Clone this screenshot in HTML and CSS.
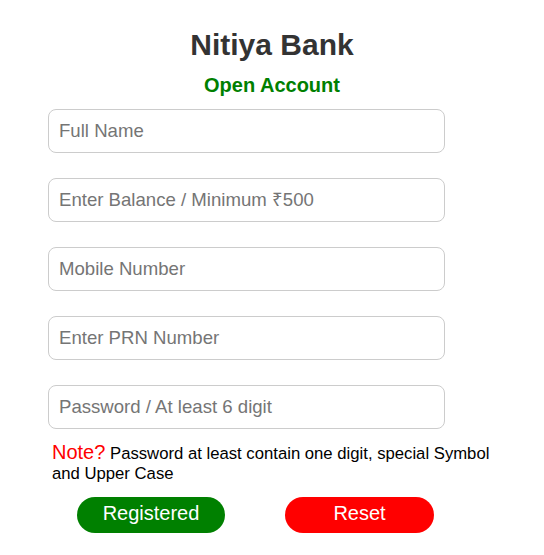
FILE: index.html
```html
<!DOCTYPE html>
<html>
<head>
<meta charset="utf-8">
<title>Nitiya Bank</title>
<link rel="stylesheet" href="styles.css">
</head>
<body>
<div class="page">
  <h1 class="title">Nitiya Bank</h1>
  <h2 class="subtitle">Open Account</h2>
  <form class="form">
    <input class="field" type="text" placeholder="Full Name">
    <input class="field" type="text" placeholder="Enter Balance / Minimum ₹500">
    <input class="field" type="text" placeholder="Mobile Number">
    <input class="field" type="text" placeholder="Enter PRN Number">
    <input class="field" type="password" placeholder="Password / At least 6 digit">
    <p class="note"><span class="note-label">Note?</span> Password at least contain one digit, special Symbol and Upper Case</p>
    <div class="actions">
      <button type="button" class="btn btn-green">Registered</button>
      <button type="reset" class="btn btn-red">Reset</button>
    </div>
  </form>
</div>
</body>
</html>
```

FILE: styles.css
```css
* { box-sizing: border-box; }
body {
  margin: 8px;
  font-family: "Liberation Sans", Arial, sans-serif;
  background: #fff;
}
.page {
  padding-top: 20px;
}
.title {
  margin: 0;
  text-align: center;
  font-size: 30px;
  font-weight: bold;
  color: #333;
  line-height: normal;
}
.subtitle {
  margin: 11.5px 0 0;
  text-align: center;
  font-size: 20px;
  font-weight: bold;
  color: #008000;
  line-height: normal;
}
.form {
  margin: 12px 0 0 40px;
  width: 452px;
  display: flex;
  flex-direction: column;
  align-items: flex-start;
}
.field {
  width: 397px;
  height: 44px;
  margin: 0 0 25px;
  padding: 0 10px;
  border: 1px solid #ccc;
  border-radius: 8px;
  font-family: "Liberation Sans", Arial, sans-serif;
  font-size: 18.6px;
  color: #333;
  outline: none;
}
.field::placeholder { color: #757575; }
.field:last-of-type { margin-bottom: 13.5px; }
.note {
  margin: 0 0 13px 4px;
  width: 448px;
  font-size: 16.7px;
  line-height: 20px;
  color: #000;
}
.note-label {
  color: #ff0000;
  font-size: 20px;
}
.actions {
  display: flex;
  gap: 60px;
  padding-left: 29px;
}
.btn {
  width: 148px;
  height: 36px;
  border: none;
  border-radius: 18px;
  color: #fff;
  font-family: "Liberation Sans", Arial, sans-serif;
  font-size: 20px;
  padding: 0 0 3px;
  cursor: pointer;
}
.btn-green { background: #008000; }
.btn-red { background: #ff0000; width: 149px; }
```
